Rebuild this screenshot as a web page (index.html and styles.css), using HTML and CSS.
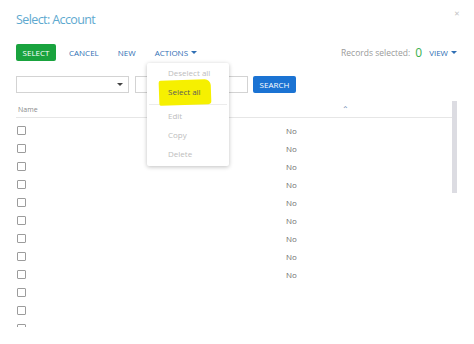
FILE: index.html
```html
<!DOCTYPE html>
<html lang="en">
<head>
  <meta charset="UTF-8">
  <title>Select: Account</title>
  <link rel="stylesheet" href="styles.css">
</head>
<body>

  <div class="dialog">
    <!-- Title -->
    <div class="dialog-header">
      <h2>Select: Account</h2>
      <span class="close">&#x2715;</span>
    </div>

    <!-- Toolbar -->
    <div class="toolbar">
      <div class="toolbar-left">
        <button class="btn-select">SELECT</button>
        <span class="link">CANCEL</span>
        <span class="link">NEW</span>
        <span class="link actions">ACTIONS <span class="caret"></span></span>

        <div class="menu">
          <div class="highlight"></div>
          <div class="menu-item">Deselect all</div>
          <div class="menu-item active">Select all</div>
          <div class="menu-sep"></div>
          <div class="menu-item">Edit</div>
          <div class="menu-item">Copy</div>
          <div class="menu-item">Delete</div>
        </div>
      </div>
      <div class="toolbar-right">
        <span class="records">Records selected:</span>
        <span class="count">0</span>
        <span class="link">VIEW <span class="caret"></span></span>
      </div>
    </div>

    <!-- Filter -->
    <div class="filter">
      <div class="select-box"><span class="caret dark"></span></div>
      <div class="text-box"></div>
      <button class="btn-search">SEARCH</button>
    </div>

    <!-- Grid -->
    <div class="grid">
      <div class="grid-body">
        <div class="grid-head">
          <span class="col-name">Name</span>
          <span class="sort">&#x2303;</span>
        </div>
        <div class="rows" id="rows"></div>
      </div>
      <div class="scrollbar"><div class="thumb"></div></div>
    </div>
  </div>

  <script>
    // Fill the grid rows
    const rows = document.getElementById('rows');
    for (let i = 0; i < 12; i++) {
      const row = document.createElement('div');
      row.className = 'row';
      row.innerHTML = '<span class="check"></span><span class="cell">' + (i < 9 ? 'No' : '') + '</span>';
      rows.appendChild(row);
    }
  </script>

</body>
</html>
```

FILE: styles.css
```css
body {
  margin: 0;
  background: #fff;
  font-family: "Open Sans", Arial, sans-serif;
}

.dialog {
  height: 344px;
  padding: 0 16px 0 16px;
  box-sizing: border-box;
}

.dialog-header {
  height: 40px;
  display: flex;
  justify-content: space-between;
  align-items: flex-start;
}

h2 {
  margin: 12px 0 0 0;
  font-size: 12.5px;
  line-height: 16px;
  font-weight: 400;
  color: #5ea9cf;
  letter-spacing: -0.6px;
}

.close {
  margin: 9px -2px 0 0;
  font-size: 7px;
  color: #c4c4c4;
}

.toolbar {
  margin-top: 4px;
  height: 17px;
  display: flex;
  justify-content: space-between;
  align-items: center;
}

.toolbar-left {
  display: flex;
  align-items: center;
  position: relative;
}

.toolbar-right {
  display: flex;
  align-items: center;
  margin-right: 1px;
}

button {
  border: none;
  border-radius: 2px;
  color: #fff;
  font-family: "Open Sans", Arial, sans-serif;
  font-size: 8px;
  height: 17px;
  padding: 0;
}

.btn-select {
  width: 40px;
  background: #19a33e;
}

.link {
  font-size: 8px;
  color: #2f6fb4;
  display: flex;
  align-items: center;
}

.toolbar-left .link {
  margin-left: 13px;
}

.toolbar-left .link + .link {
  margin-left: 19px;
}

.caret {
  display: inline-block;
  width: 0;
  height: 0;
  margin-left: 3px;
  border-left: 3px solid transparent;
  border-right: 3px solid transparent;
  border-top: 3px solid #2f6fb4;
}

.caret.dark {
  border-top-color: #444;
}

.records {
  font-size: 8.5px;
  color: #9a9a9a;
}

.count {
  font-size: 12px;
  color: #39b04e;
  margin: 0 7px 0 5px;
  line-height: 14px;
}

/* Actions menu */
.menu {
  position: absolute;
  top: 19px;
  left: 131px;
  width: 82px;
  padding: 0 0 3px 0;
  background: #fff;
  border-radius: 2px;
  box-shadow: 0 1px 4px rgba(0, 0, 0, 0.25);
  z-index: 5;
}

.menu-item {
  position: relative;
  height: 19px;
  line-height: 19px;
  padding-left: 21px;
  font-size: 8px;
  color: #bdbdbd;
}

.menu-item.active {
  color: #5b5b5b;
  height: 22px;
  line-height: 20px;
}

.menu-sep {
  height: 1px;
  background: #ececec;
  margin: 0 2px 1px 2px;
}

.highlight {
  position: absolute;
  top: 17px;
  left: 12px;
  width: 52px;
  height: 25px;
  background: #f6f000;
  transform: rotate(-2deg);
  border-radius: 2px 6px 3px 2px;
}

/* Filter row */
.filter {
  margin-top: 15px;
  height: 17px;
  display: flex;
  align-items: stretch;
}

.select-box {
  width: 113px;
  border: 1px solid #d3d3d3;
  box-sizing: border-box;
  display: flex;
  align-items: center;
  justify-content: flex-end;
  padding-right: 5px;
}

.text-box {
  width: 113px;
  margin-left: 6px;
  border: 1px solid #d3d3d3;
  box-sizing: border-box;
}

.btn-search {
  width: 43px;
  margin-left: 5px;
  background: #1b73d3;
}

/* Grid */
.grid {
  margin-top: 8px;
  height: 226px;
  display: flex;
  overflow: hidden;
}

.grid-body {
  flex: 1;
}

.grid-head {
  height: 16px;
  border-bottom: 1px solid #e6e6e6;
  display: flex;
  align-items: center;
  position: relative;
}

.col-name {
  margin-left: 2px;
  font-size: 7px;
  color: #8a8a8a;
}

.sort {
  position: absolute;
  left: 326px;
  top: 2px;
  font-size: 8px;
  color: #6f8bb0;
}

.rows {
  padding-top: 3px;
}

.row {
  height: 18px;
  display: flex;
  align-items: center;
}

.check {
  width: 9px;
  height: 9px;
  margin-left: 1px;
  border: 1px solid #9c9c9c;
  border-radius: 1px;
  box-sizing: border-box;
}

.cell {
  margin-left: 260px;
  font-size: 8px;
  color: #707070;
}

.scrollbar {
  width: 5px;
  margin-right: 1px;
}

.thumb {
  height: 92px;
  background: #dcdce2;
}
```
